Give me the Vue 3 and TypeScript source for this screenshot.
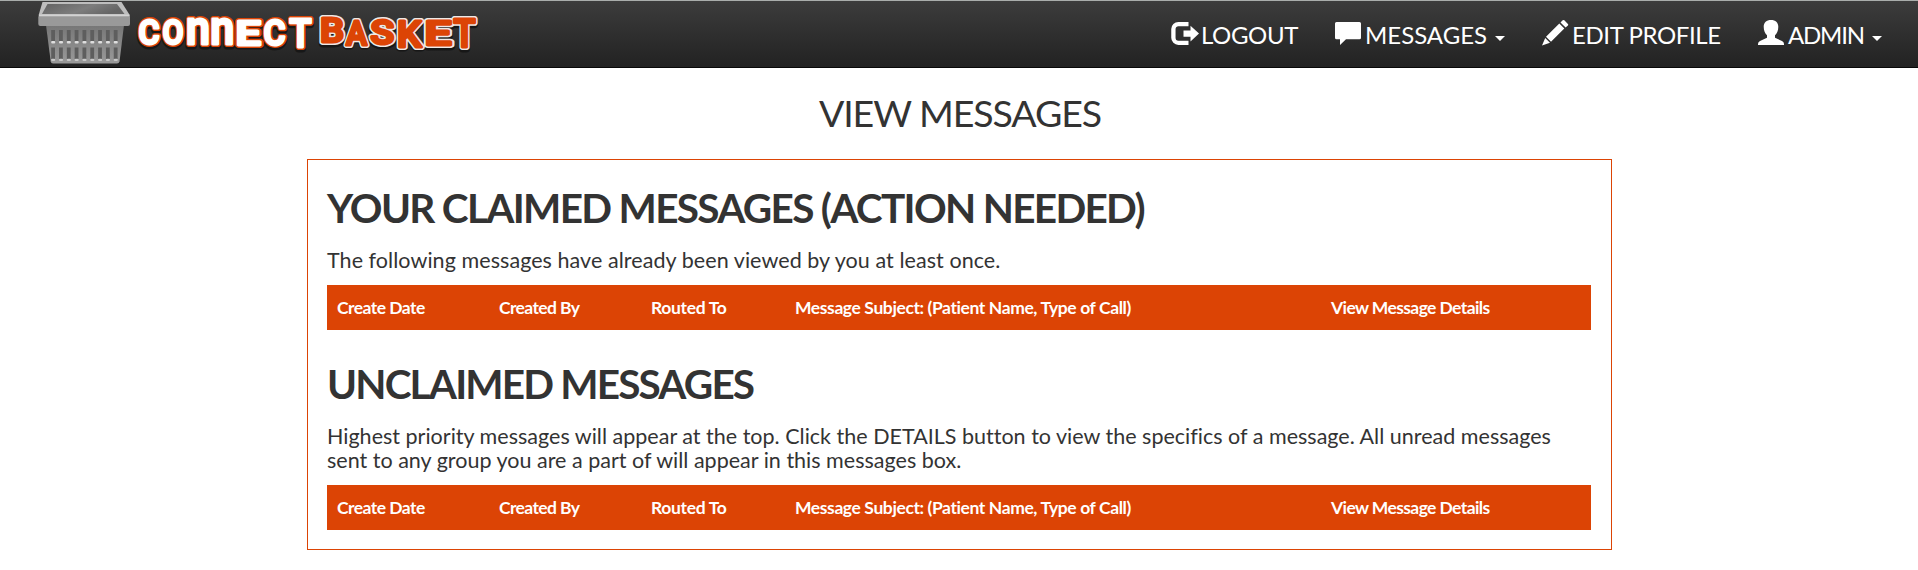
<script setup lang="ts">
interface LogoLetter { ch: string; x: number; y: number; w: number; size: number }
interface Column { label: string; key: string }
interface Section { title: string; key: string; lines: string[] }

const connect: LogoLetter[] = [
  { ch: 'C', x: 138.5, y: 44.3, w: 21, size: 34 },
  { ch: 'O', x: 162.5, y: 44.3, w: 21, size: 34 },
  { ch: 'n', x: 186, y: 44.3, w: 24, size: 46 },
  { ch: 'n', x: 210.3, y: 44.3, w: 24, size: 46 },
  { ch: 'E', x: 235.5, y: 44.5, w: 25.5, size: 34 },
  { ch: 'C', x: 263.5, y: 45, w: 22, size: 35 },
  { ch: 'T', x: 289.5, y: 47, w: 22, size: 38 },
]

const basket: LogoLetter[] = [
  { ch: 'B', x: 320, y: 42.3, w: 24, size: 34 },
  { ch: 'A', x: 346, y: 44.5, w: 21, size: 34 },
  { ch: 'S', x: 370.5, y: 44.3, w: 23.5, size: 33 },
  { ch: 'K', x: 397, y: 46.5, w: 24.5, size: 37 },
  { ch: 'E', x: 424.5, y: 45, w: 27, size: 34 },
  { ch: 'T', x: 453.5, y: 47, w: 22, size: 38 },
]

const slots = Array.from({ length: 9 }, (_, i) => 51.2 + i * 7.82)

const columns: Column[] = [
  { label: 'Create Date', key: 'date' },
  { label: 'Created By', key: 'author' },
  { label: 'Routed To', key: 'route' },
  { label: 'Message Subject: (Patient Name, Type of Call)', key: 'subject' },
  { label: 'View Message Details', key: 'details' },
]

const sections: Section[] = [
  {
    title: 'YOUR CLAIMED MESSAGES (ACTION NEEDED)',
    key: 'claimed',
    lines: ['The following messages have already been viewed by you at least once.'],
  },
  {
    title: 'UNCLAIMED MESSAGES',
    key: 'unclaimed',
    lines: [
      'Highest priority messages will appear at the top. Click the DETAILS button to view the specifics of a message. All unread messages',
      'sent to any group you are a part of will appear in this messages box.',
    ],
  },
]
</script>

<template>
  <header class="navbar">
    <svg class="logo" width="490" height="66" viewBox="0 1 490 66">
      <defs>
        <linearGradient id="crate" x1="0" y1="0" x2="0" y2="1">
          <stop offset="0" stop-color="#767676" />
          <stop offset="1" stop-color="#9a9a9a" />
        </linearGradient>
        <linearGradient id="hole" x1="0" y1="0" x2="1" y2="0.3">
          <stop offset="0" stop-color="#626262" />
          <stop offset="0.6" stop-color="#7d7d7d" />
          <stop offset="1" stop-color="#656565" />
        </linearGradient>
      </defs>
      <path d="M46 25H124L119.5 61.5Q119 63.5 117 63.5H53Q51 63.5 50.7 61.5Z" fill="url(#crate)" />
      <g v-for="x in slots" :key="x">
        <rect :x="x" y="30" width="3.8" height="11" fill="#5e5e5e" />
        <rect :x="x" y="41" width="4" height="2.4" rx="1" fill="#dedede" />
        <rect :x="x" y="47.5" width="3.8" height="11.5" fill="#5e5e5e" />
        <rect :x="x" y="58.8" width="4" height="2.2" rx="1" fill="#c8c8c8" />
      </g>
      <path d="M42.5 2H121.5L130 15.5H38.5Z" fill="#bebebe" />
      <path d="M47.5 4H117L124.5 14H42Z" fill="url(#hole)" />
      <rect x="38.3" y="15" width="91.7" height="11" rx="2" fill="#999" />
      <rect x="39" y="14.6" width="90.5" height="1.7" fill="#d2d2d2" />
      <g class="letters shade">
        <text v-for="(l, i) in connect.concat(basket)" :key="i" :x="l.x" :y="l.y + 1.5" :font-size="l.size" :textLength="l.w" lengthAdjust="spacingAndGlyphs">{{ l.ch }}</text>
      </g>
      <g class="letters connect-edge">
        <text v-for="(l, i) in connect" :key="i" :x="l.x" :y="l.y" :font-size="l.size" :textLength="l.w" lengthAdjust="spacingAndGlyphs">{{ l.ch }}</text>
      </g>
      <g class="letters connect-face">
        <text v-for="(l, i) in connect" :key="i" :x="l.x" :y="l.y" :font-size="l.size" :textLength="l.w" lengthAdjust="spacingAndGlyphs">{{ l.ch }}</text>
      </g>
      <g class="letters basket-edge">
        <text v-for="(l, i) in basket" :key="i" :x="l.x" :y="l.y" :font-size="l.size" :textLength="l.w" lengthAdjust="spacingAndGlyphs">{{ l.ch }}</text>
      </g>
      <g class="letters basket-face">
        <text v-for="(l, i) in basket" :key="i" :x="l.x" :y="l.y" :font-size="l.size" :textLength="l.w" lengthAdjust="spacingAndGlyphs">{{ l.ch }}</text>
      </g>
    </svg>

    <nav class="menu">
      <a class="item logout">
        <svg width="30" height="27" viewBox="0 0 30 27">
          <path d="M17.5 5.1H7.4a5 5 0 0 0-5 5v8.7a5 5 0 0 0 5 5H17.5" fill="none" stroke="#fff" stroke-width="4.3" />
          <path d="M12.5 11.5h7V6.8L28 14.6 19.5 22.5V17.8h-7z" fill="#fff" />
        </svg>
        <span>LOGOUT</span>
      </a>
      <a class="item messages">
        <svg width="30" height="27" viewBox="0 0 30 27">
          <path d="M1.5 3h23Q26 3 26 4.5V18.800q0 1.500-1.500 1.500H11L5 26V20.300H1.500Q0 20.300 0 18.800V4.500Q0 3 1.500 3z" fill="#fff" />
        </svg>
        <span>MESSAGES</span>
        <i class="caret" />
      </a>
      <a class="item edit">
        <svg width="30" height="27" viewBox="0 0 30 27">
          <path d="M17.300 4.600L22.300 9.500 9 22.800 4 17.800zM3.200 18.900L8 23.700 0 26.500zM18.500 3.400L20.700 1.300Q21.500.6 22.300 1.300L25.900 4.900Q26.700 5.700 25.900 6.400L23.600 8.500z" fill="#fff" />
        </svg>
        <span>EDIT PROFILE</span>
      </a>
      <a class="item admin">
        <svg width="30" height="27" viewBox="0 0 30 27">
          <path d="M13 1C17.500 1 20.300 3.700 20.300 7.800 20.300 11.500 19 14.500 17 16.200V18.800L24 22Q26 23 26 25V26H0V25Q0 23 2 22L9 18.800V16.200C7 14.500 5.700 11.500 5.700 7.800 5.700 3.700 8.500 1 13 1z" fill="#fff" />
        </svg>
        <span>ADMIN</span>
        <i class="caret" />
      </a>
    </nav>
  </header>

  <main class="page">
    <h1>VIEW MESSAGES</h1>
    <div class="panel">
      <section v-for="s in sections" :key="s.key" :class="s.key">
        <h2>{{ s.title }}</h2>
        <p><span v-for="line in s.lines" :key="line">{{ line }}</span></p>
        <div class="head">
          <div v-for="c in columns" :key="c.key" :class="c.key">{{ c.label }}</div>
        </div>
      </section>
    </div>
  </main>
</template>

<style>
body {
  margin: 0;
  background: #fff;
  overflow: hidden;
}
</style>

<style scoped>
.navbar {
  box-sizing: border-box;
  height: 68px;
  border-top: 1px solid #a9adab;
  border-bottom: 1px solid #080808;
  background: linear-gradient(#3c3c3c, #222);
  display: flex;
  justify-content: space-between;
  font-family: Lato, sans-serif;
}
.logo {
  display: block;
}
.letters {
  font-family: Roboto, sans-serif;
  font-weight: 500;
  stroke-linejoin: round;
}
.shade {
  fill: #171717;
  stroke: #171717;
  stroke-width: 7px;
}
.connect-edge {
  fill: #dc4405;
  stroke: #dc4405;
  stroke-width: 5.8px;
}
.connect-face {
  fill: #fff;
  stroke: #fff;
  stroke-width: 2.8px;
}
.basket-edge {
  fill: #eee9e6;
  stroke: #eee9e6;
  stroke-width: 6px;
}
.basket-face {
  fill: #dc4405;
  stroke: #dc4405;
  stroke-width: 3px;
}
.menu {
  display: flex;
  padding: 18px 36px 0 0;
}
.item {
  display: flex;
  height: 27px;
  color: #fff;
  font-size: 24px;
  line-height: 31px;
  white-space: nowrap;
}
.item svg {
  flex: none;
}
.logout {
  width: 164px;
  letter-spacing: -0.4px;
}
.messages {
  width: 207px;
}
.edit {
  width: 216px;
  letter-spacing: -0.4px;
}
.admin {
  width: 124px;
  letter-spacing: -1.2px;
}
.caret {
  width: 0;
  height: 0;
  margin: 17px 0 0 auto;
  border: 5px solid transparent;
  border-top-color: #fff;
  border-bottom: 0;
}
.messages .caret {
  margin-right: 37px;
}
.page {
  font-family: Lato, sans-serif;
  color: #333;
}
h1 {
  margin: 24px 0 26px;
  padding-left: 2px;
  font-size: 37.5px;
  font-weight: 400;
  line-height: 41px;
  letter-spacing: -1.08px;
  text-align: center;
}
.panel {
  box-sizing: border-box;
  width: 1305px;
  margin-left: 307px;
  padding: 26px 20px 19px 19px;
  border: 1px solid #dc4405;
}
section + section {
  margin-top: 32px;
}
h2 {
  margin: 0 0 18px;
  font-size: 40.5px;
  font-weight: 700;
  line-height: 44px;
  letter-spacing: -1.68px;
  white-space: nowrap;
}
.unclaimed h2 {
  letter-spacing: -1.82px;
}
p {
  margin: 0 0 13px;
  font-size: 21.5px;
  line-height: 24px;
  letter-spacing: 0.01px;
  white-space: nowrap;
}
p span {
  display: block;
}
.claimed p {
  letter-spacing: 0.06px;
}
.head {
  display: grid;
  grid-template-columns: 162px 153px 143px 536px 270px;
  height: 45px;
  background: #dc4405;
  color: #fff;
  font-size: 17.5px;
  font-weight: 700;
  line-height: 45px;
  white-space: nowrap;
}
.head div {
  padding-left: 10px;
}
.date {
  letter-spacing: -0.53px;
}
.author {
  letter-spacing: -0.6px;
}
.head .route {
  padding-left: 9px;
  letter-spacing: -0.34px;
}
.subject {
  letter-spacing: -0.4px;
}
.details {
  letter-spacing: -0.6px;
}
</style>
